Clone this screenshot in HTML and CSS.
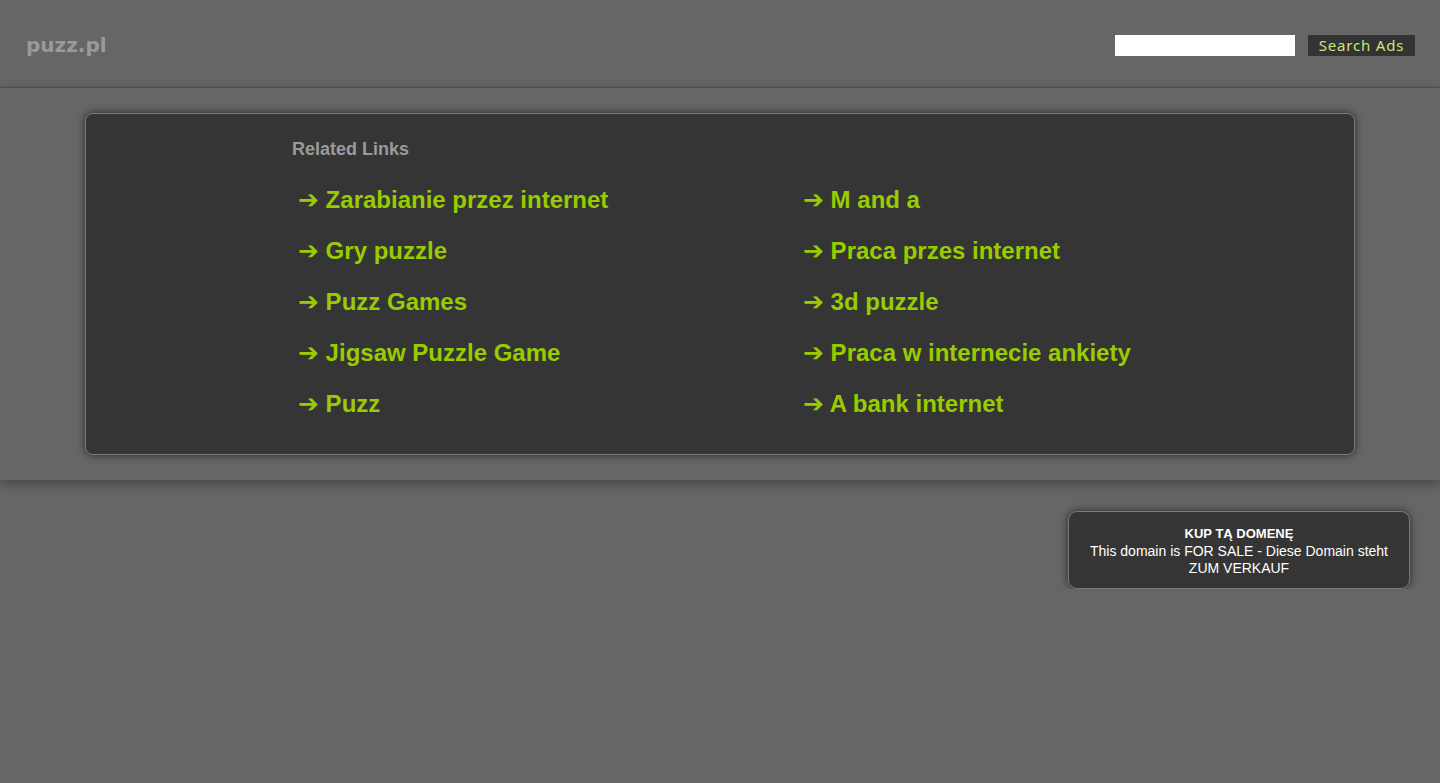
FILE: index.html
```
<!DOCTYPE html>
<html lang="pl">

<head>
    <meta charset="UTF-8">
    <meta name="viewport" content="width=device-width, initial-scale=1.0">
    <title>puzz.pl</title>
    <link rel="stylesheet" href="styles.css">
</head>

<body>
    <div class="header">
        <a class="logo" href="#">puzz.pl</a>
        <form class="search">
            <input type="text" class="searchInput">
            <button type="button" class="searchBut">Search Ads</button>
        </form>
    </div>

    <div class="main">
        <div class="box">
            <div class="content">
                <p class="related">Related Links</p>
                <ul class="links">
                    <li><a href="#"><span class="arrow">➔</span> Zarabianie przez internet</a></li>
                    <li><a href="#"><span class="arrow">➔</span> M and a</a></li>
                    <li><a href="#"><span class="arrow">➔</span> Gry puzzle</a></li>
                    <li><a href="#"><span class="arrow">➔</span> Praca przes internet</a></li>
                    <li><a href="#"><span class="arrow">➔</span> Puzz Games</a></li>
                    <li><a href="#"><span class="arrow">➔</span> 3d puzzle</a></li>
                    <li><a href="#"><span class="arrow">➔</span> Jigsaw Puzzle Game</a></li>
                    <li><a href="#"><span class="arrow">➔</span> Praca w internecie ankiety</a></li>
                    <li><a href="#"><span class="arrow">➔</span> Puzz</a></li>
                    <li><a href="#"><span class="arrow">➔</span> A bank internet</a></li>
                </ul>
            </div>
        </div>
    </div>

    <div class="saleWrap">
        <div class="sale">
            <p class="saleTitle">KUP TĄ DOMENĘ</p>
            <p class="saleText">This domain is FOR SALE - Diese Domain steht ZUM VERKAUF</p>
        </div>
    </div>
</body>

</html>
```

FILE: styles.css
```
body {
    margin: 0;
    background-color: #666666;
    font-family: "Liberation Sans", Arial, sans-serif;
}

p {
    margin: 0;
}

.header {
    height: 87px;
    border-bottom: 1px solid #555555;
    display: flex;
    flex-direction: row;
    align-items: center;
    justify-content: space-between;
    padding: 0 25px 0 26px;
}

.logo {
    font-family: "DejaVu Sans", Verdana, sans-serif;
    font-weight: bold;
    font-size: 20px;
    color: #9a9a9a;
    text-decoration: none;
    margin-top: 2px;
}

.search {
    display: flex;
    flex-direction: row;
    align-items: center;
    gap: 13px;
    margin: 3px 0 0;
}

.searchInput {
    width: 180px;
    height: 21px;
    border: 0px;
    padding: 0;
    background-color: white;
}

.searchBut {
    width: 107px;
    height: 21px;
    border: 0px;
    padding: 0;
    background-color: #333333;
    color: #cde57c;
    font-family: "Noto Sans", sans-serif;
    font-size: 15px;
    letter-spacing: 0.8px;
    line-height: 21px;
}

.main {
    padding: 25px 0;
    box-shadow: 0 3px 12px rgba(0, 0, 0, 0.35);
    position: relative;
}

.box {
    width: 1268px;
    margin: auto;
    background-color: #353535;
    border: 1px solid #7a7a7a;
    border-radius: 8px;
    box-shadow: 0 0 8px rgba(0, 0, 0, 0.6);
}

.content {
    padding: 24px 0 25px 206px;
}

.related {
    font-size: 18px;
    font-weight: bold;
    color: #9a9a9a;
    line-height: 22px;
    margin-bottom: 14px;
}

.links {
    list-style: none;
    margin: 0;
    padding: 0;
    display: grid;
    grid-template-columns: 505px 1fr;
}

.links li {
    height: 51px;
    line-height: 51px;
    padding-left: 6px;
}

.links a {
    font-size: 24px;
    font-weight: bold;
    color: #99cc00;
    text-decoration: none;
}

.arrow {
    font-family: "DejaVu Sans", sans-serif;
    font-size: 25px;
}

.saleWrap {
    display: flex;
    justify-content: flex-end;
    padding: 31px 30px 0 0;
}

.sale {
    width: 300px;
    padding: 13px 20px 11px;
    background-color: #353535;
    border: 1px solid #7a7a7a;
    border-radius: 9px;
    box-shadow: 0 0 8px rgba(0, 0, 0, 0.6);
    color: white;
    text-align: center;
    font-size: 14px;
    line-height: 17px;
}

.saleTitle {
    font-weight: bold;
    font-size: 13px;
    margin-bottom: 1px;
}
```
